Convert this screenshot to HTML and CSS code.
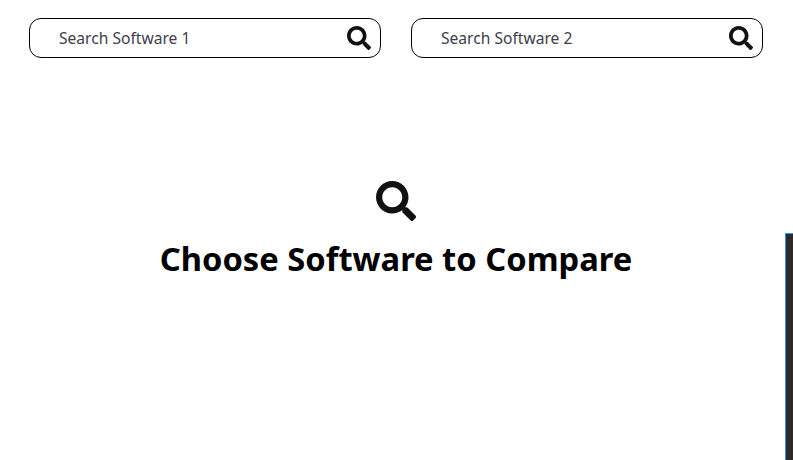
FILE: index.html
```html
<!DOCTYPE html>
<html lang="en">
<head>
  <meta charset="UTF-8">
  <title>Compare Software</title>
  <link rel="stylesheet" href="styles.css">
</head>
<body>

  <div class="search-row">
    <div class="search-box">
      <input class="search-input" type="text" placeholder="Search Software 1">
      <svg class="search-icon" viewBox="0 0 512 512"><path d="M505 442.7L405.3 343c-4.5-4.5-10.6-7-17-7H372c27.6-35.3 44-79.7 44-128C416 93.1 322.9 0 208 0S0 93.1 0 208s93.1 208 208 208c48.3 0 92.7-16.4 128-44v16.3c0 6.4 2.5 12.5 7 17l99.7 99.7c9.4 9.4 24.6 9.4 33.9 0l28.3-28.3c9.4-9.4 9.4-24.6.1-34zM208 336c-70.7 0-128-57.2-128-128 0-70.7 57.2-128 128-128 70.7 0 128 57.2 128 128 0 70.7-57.2 128-128 128z"/></svg>
    </div>
    <div class="search-box">
      <input class="search-input" type="text" placeholder="Search Software 2">
      <svg class="search-icon" viewBox="0 0 512 512"><path d="M505 442.7L405.3 343c-4.5-4.5-10.6-7-17-7H372c27.6-35.3 44-79.7 44-128C416 93.1 322.9 0 208 0S0 93.1 0 208s93.1 208 208 208c48.3 0 92.7-16.4 128-44v16.3c0 6.4 2.5 12.5 7 17l99.7 99.7c9.4 9.4 24.6 9.4 33.9 0l28.3-28.3c9.4-9.4 9.4-24.6.1-34zM208 336c-70.7 0-128-57.2-128-128 0-70.7 57.2-128 128-128 70.7 0 128 57.2 128 128 0 70.7-57.2 128-128 128z"/></svg>
    </div>
  </div>

  <div class="empty-state">
    <svg class="empty-icon" viewBox="0 0 512 512"><path d="M505 442.7L405.3 343c-4.5-4.5-10.6-7-17-7H372c27.6-35.3 44-79.7 44-128C416 93.1 322.9 0 208 0S0 93.1 0 208s93.1 208 208 208c48.3 0 92.7-16.4 128-44v16.3c0 6.4 2.5 12.5 7 17l99.7 99.7c9.4 9.4 24.6 9.4 33.9 0l28.3-28.3c9.4-9.4 9.4-24.6.1-34zM208 336c-70.7 0-128-57.2-128-128 0-70.7 57.2-128 128-128 70.7 0 128 57.2 128 128 0 70.7-57.2 128-128 128z"/></svg>
    <h1 class="empty-title">Choose Software to Compare</h1>
  </div>

  <div class="side-panel"></div>

</body>
</html>
```

FILE: styles.css
```css
html, body {
  height: 100%;
}

body {
  margin: 0;
  font-family: "Noto Sans", "Open Sans", sans-serif;
  background: #fff;
  color: #000;
  overflow: hidden;
}

.search-row {
  display: grid;
  grid-template-columns: 352px 352px;
  gap: 30px;
  padding: 18px 0 0 29px;
}

.search-box {
  display: flex;
  align-items: center;
  height: 40px;
  box-sizing: border-box;
  padding: 0 9px 0 29px;
  border: 1px solid #000;
  border-radius: 12px;
}

.search-input {
  flex: 1;
  min-width: 0;
  padding: 0;
  border: none;
  outline: none;
  background: none;
  font-family: inherit;
  font-size: 15.6px;
}

.search-input::placeholder {
  color: #3d3d4a;
  opacity: 1;
}

.search-icon {
  width: 24px;
  height: 24px;
  fill: #111;
}

.empty-state {
  display: flex;
  flex-direction: column;
  align-items: center;
  padding: 123px 1px 0 0;
}

.empty-icon {
  width: 40px;
  height: 40px;
  fill: #111;
}

.empty-title {
  margin: 16px 0 0;
  font-size: 32.7px;
  font-weight: 700;
  line-height: 44px;
}

.side-panel {
  position: absolute;
  top: 233px;
  right: 0;
  bottom: 0;
  width: 7px;
  background: #2b2b2e;
  border-left: 1px solid #3d8fe0;
  border-top: 1px solid #3d8fe0;
}
```
